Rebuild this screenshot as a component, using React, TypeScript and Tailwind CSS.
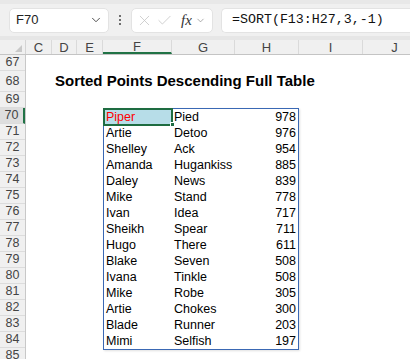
import { ChevronDown, X, Check } from "lucide-react";

const cols = [
  { name: "C", w: 26 },
  { name: "D", w: 25 },
  { name: "E", w: 26 },
  { name: "F", w: 69 },
  { name: "G", w: 63 },
  { name: "H", w: 64 },
  { name: "I", w: 64 },
  { name: "J", w: 64 },
];

const data: [string, string, number][] = [
  ["Piper", "Pied", 978],
  ["Artie", "Detoo", 976],
  ["Shelley", "Ack", 954],
  ["Amanda", "Hugankiss", 885],
  ["Daley", "News", 839],
  ["Mike", "Stand", 778],
  ["Ivan", "Idea", 717],
  ["Sheikh", "Spear", 711],
  ["Hugo", "There", 611],
  ["Blake", "Seven", 508],
  ["Ivana", "Tinkle", 508],
  ["Mike", "Robe", 305],
  ["Artie", "Chokes", 300],
  ["Blade", "Runner", 203],
  ["Mimi", "Selfish", 197],
];

const rows = [
  { n: 67, h: "h-[16px]" },
  { n: 68, h: "h-[21px]" },
  { n: 69, h: "h-[16px]" },
  ...Array.from({ length: 16 }, (_, i) => ({ n: 70 + i, h: "h-[16px]" })),
];

export default function App() {
  return (
    <div className="w-[410px] h-[359px] overflow-hidden bg-white font-['Liberation_Sans',Arial,sans-serif] text-black">
      {/* Formula bar */}
      <div className="h-[40px] bg-[#f0f0f0] border-t-[4px] border-b-[4px] border-t-[#e8e8e8] border-b-[#e6e6e6] flex items-center pl-[9px]">
        <div className="w-[100px] h-[25px] bg-white rounded-[5px] border border-[#e3e3e3] flex items-center justify-between pl-[6px] pr-[5px]">
          <span className="text-[13px] text-[#222]">F70</span>
          <ChevronDown size={14} strokeWidth={1.6} className="text-[#444]" />
        </div>
        <div className="w-[22px] flex flex-col items-center gap-[2px]">
          <span className="w-[2px] h-[2px] bg-[#444] rounded-full" />
          <span className="w-[2px] h-[2px] bg-[#444] rounded-full" />
          <span className="w-[2px] h-[2px] bg-[#444] rounded-full" />
        </div>
        <div className="w-[82px] h-[25px] bg-white rounded-[5px] border border-[#e3e3e3] flex items-center pl-[4px] gap-[3px]">
          <X size={17} strokeWidth={1.1} className="text-[#c4c4c4]" />
          <Check size={17} strokeWidth={1.1} className="text-[#c4c4c4]" />
          <span className="ml-[5px] font-['Liberation_Serif',serif] italic text-[15px] text-[#333] leading-none">
            fx
          </span>
          <ChevronDown size={11} strokeWidth={1.5} className="text-[#888]" />
        </div>
        <div className="ml-[8px] flex-1 h-[25px] bg-white rounded-l-[5px] border border-r-0 border-[#e3e3e3] flex items-center pl-[10px]">
          <span className="font-['Liberation_Mono',monospace] text-[13.3px] text-[#111]">
            =SORT(F13:H27,3,-1)
          </span>
        </div>
      </div>

      {/* Column headers */}
      <div className="flex h-[15px] bg-[#f0f0f0] border-b border-[#c4c4c4]">
        <div className="w-[26px] shrink-0 border-r border-[#d4d4d4] flex items-end justify-end pr-[3px] pb-[2px]">
          <div className="w-0 h-0 border-l-[7px] border-l-transparent border-b-[7px] border-b-[#c8c8c8]" />
        </div>
        {cols.map((c) => (
          <div
            key={c.name}
            style={{ width: c.w }}
            className={`shrink-0 flex items-center justify-center text-[13px] leading-none border-r border-[#dadada] text-[#444] ${
              c.name === "F" ? "border-b-2 border-b-[#217346]" : ""
            }`}
          >
            {c.name}
          </div>
        ))}
      </div>

      <div className="flex">
        {/* Row headers */}
        <div className="w-[26px] shrink-0 bg-[#f0f0f0] border-r border-[#c8c8c8]">
          {rows.map((r) => (
            <div
              key={r.n}
              className={`${r.h} flex items-center justify-center text-[12.5px] leading-none border-b border-[#dcdcdc] text-[#444] ${
                r.n === 70 ? "bg-[#dedede] border-r-2 border-r-[#217346]" : ""
              }`}
            >
              {r.n}
            </div>
          ))}
        </div>

        {/* Sheet */}
        <div className="flex-1 text-[12.5px]">
          <div className="h-[16px]" />
          <div className="h-[21px] flex items-center pl-[29px] font-bold text-[15px] whitespace-nowrap">
            Sorted Points Descending Full Table
          </div>
          <div className="h-[16px]" />
          <div className="ml-[77px] w-[196px] border border-[#3a68b4] relative shadow-[1px_1px_2px_rgba(0,0,0,0.12)]">
            {data.map(([a, b, n], i) => (
              <div key={i} className="flex h-[16px] items-center leading-none">
                <div
                  className={`w-[68px] pl-[2px] ${i === 0 ? "text-[#ff0000] bg-[#b7dde8] h-full flex items-center" : ""}`}
                >
                  {a}
                </div>
                <div className="w-[63px] pl-[2px]">{b}</div>
                <div className="w-[63px] text-right pr-[2px]">{n}</div>
              </div>
            ))}
            <div className="absolute left-[-1px] top-[-1px] w-[70px] h-[18px] border-2 border-[#1e6c41]" />
            <div className="absolute left-[66px] top-[13px] w-[5px] h-[5px] bg-[#1e6c41] border border-white" />
          </div>
        </div>
      </div>
    </div>
  );
}
